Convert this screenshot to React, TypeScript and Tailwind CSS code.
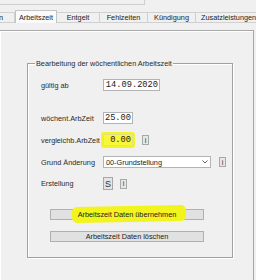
import React from "react";

function Row({ label, mt, children }: { label: string; mt: string; children: React.ReactNode }) {
  return (
    <div className={`flex h-[12px] items-center pl-[13px] ${mt}`}>
      <div className="w-[62px] text-[7.3px] leading-[9px] text-[#2a2a2a] whitespace-nowrap">{label}</div>
      <div className="flex items-center">{children}</div>
    </div>
  );
}

function InfoBtn() {
  return (
    <div className="flex h-[10px] w-[7px] items-center justify-center border border-[#a8a8a8] bg-[#e6e6e6] text-[7px] leading-[7px] text-[#333]">
      i
    </div>
  );
}

function MonoInput({ value, w, yellow }: { value: string; w: string; yellow?: boolean }) {
  return (
    <div
      className={`flex h-[12px] ${w} items-center justify-end border pr-[1px] font-['Liberation_Mono',monospace] text-[8.7px] leading-[10px] ${
        yellow ? "border-[#e3e37a] bg-[#f7f73c]" : "border-[#b4b4b4] bg-white"
      } text-[#1a1a1a]`}
    >
      {value}
    </div>
  );
}

export default function App() {
  return (
    <div className="h-[280px] w-[256px] overflow-hidden bg-[#f0f0f0] font-['Liberation_Sans',Arial,sans-serif] text-[#222]">
      <div className="h-[5px] w-[145px] border-b border-r border-[#cfcfcf]" />
      <div className="mt-[5px] flex h-[13px] items-end">
        <div className="flex h-[11px] w-[15px] items-center justify-start overflow-hidden border-b border-r border-t border-[#d0d0d0] text-[7.3px] leading-[9px]">
          <span className="-ml-[1px]">n</span>
        </div>
        <div className="flex h-[13px] w-[42px] items-center justify-center border-l border-r border-t border-[#c4c4c4] bg-[#fbfbfb] text-[7.3px] leading-[9px]">
          Arbeitszeit
        </div>
        <div className="flex h-[11px] w-[43px] items-center justify-center border-b border-r border-t border-[#d0d0d0] text-[7.3px] leading-[9px]">
          Entgelt
        </div>
        <div className="flex h-[11px] w-[48px] items-center justify-center border-b border-r border-t border-[#d0d0d0] text-[7.3px] leading-[9px]">
          Fehlzeiten
        </div>
        <div className="flex h-[11px] w-[48px] items-center justify-center border-b border-r border-t border-[#d0d0d0] text-[7.3px] leading-[9px]">
          Kündigung
        </div>
        <div className="flex h-[11px] flex-1 items-center overflow-hidden whitespace-nowrap border-b border-t border-[#d0d0d0] pl-[5px] text-[7.3px] leading-[9px]">
          Zusatzleistungen
        </div>
      </div>

      <div className="-ml-px mt-[7px] h-[262px] w-[255px] border border-[#a8a8a8] shadow-[inset_1px_1px_0_#ffffff]">
        <div className="relative ml-[27px] mt-[32px] h-[195px] w-[206px] border border-[#a0a0a0] shadow-[inset_1px_1px_0_#ffffff,1px_1px_0_#ffffff]">
          <div className="absolute -top-[5px] left-[7px] bg-[#f0f0f0] px-[1px] text-[7.3px] leading-[9px] text-[#2a2a2a] whitespace-nowrap">
            Bearbeitung der wöchentlichen Arbeitszeit
          </div>

          <div className="flex flex-col">
            <Row label="gültig ab" mt="mt-[15px]">
              <MonoInput value="14.09.2020" w="w-[57px]" />
            </Row>
            <Row label="wöchent.ArbZeit" mt="mt-[21px]">
              <MonoInput value="25.00" w="w-[30px]" />
            </Row>
            <Row label="vergleichb.ArbZeit" mt="mt-[10px]">
              <div className="relative">
                <div className="absolute -inset-x-[2px] -inset-y-[2px] rounded-[3px] bg-[#f3f32a]" />
                <div className="relative">
                  <MonoInput value="0.00" w="w-[30px]" yellow />
                </div>
              </div>
              <div className="ml-[9px]">
                <InfoBtn />
              </div>
            </Row>
            <Row label="Grund Änderung" mt="mt-[10px]">
              <div className="flex h-[12px] w-[108px] items-center justify-between border border-[#b4b4b4] bg-white pl-[2px] pr-[2px] text-[7.3px] leading-[9px] text-[#222]">
                <span>00-Grundstellung</span>
                <svg width="6" height="4" viewBox="0 0 6 4">
                  <path d="M0.5 0.5 L3 3 L5.5 0.5" fill="none" stroke="#555" strokeWidth="0.9" />
                </svg>
              </div>
              <div className="ml-[8px]">
                <InfoBtn />
              </div>
            </Row>
            <div className="mt-[9px] flex h-[13px] items-center pl-[13px]">
              <div className="w-[62px] text-[7.3px] leading-[9px] text-[#2a2a2a]">Erstellung</div>
              <div className="flex h-[13px] w-[10px] items-center justify-center border border-[#a8a8a8] bg-[#e4e4e4] text-[9px] leading-[10px] text-[#333]">
                S
              </div>
              <div className="ml-[7px]">
                <InfoBtn />
              </div>
            </div>

            <div className="relative ml-[22px] mt-[19px] flex h-[11px] w-[154px] items-center justify-center border border-[#b0b0b0] bg-[#e1e1e1] text-[7.3px] leading-[9px] text-[#222]">
              <div className="absolute left-[21px] top-[-4px] h-[16px] w-[114px] -rotate-1 rounded-[5px] bg-[#f3f31e]" />
              <span className="relative">Arbeitszeit Daten übernehmen</span>
            </div>
            <div className="ml-[22px] mt-[11px] flex h-[11px] w-[154px] items-center justify-center border border-[#b0b0b0] bg-[#e1e1e1] text-[7.3px] leading-[9px] text-[#222]">
              Arbeitszeit Daten löschen
            </div>
          </div>
        </div>
      </div>
    </div>
  );
}
